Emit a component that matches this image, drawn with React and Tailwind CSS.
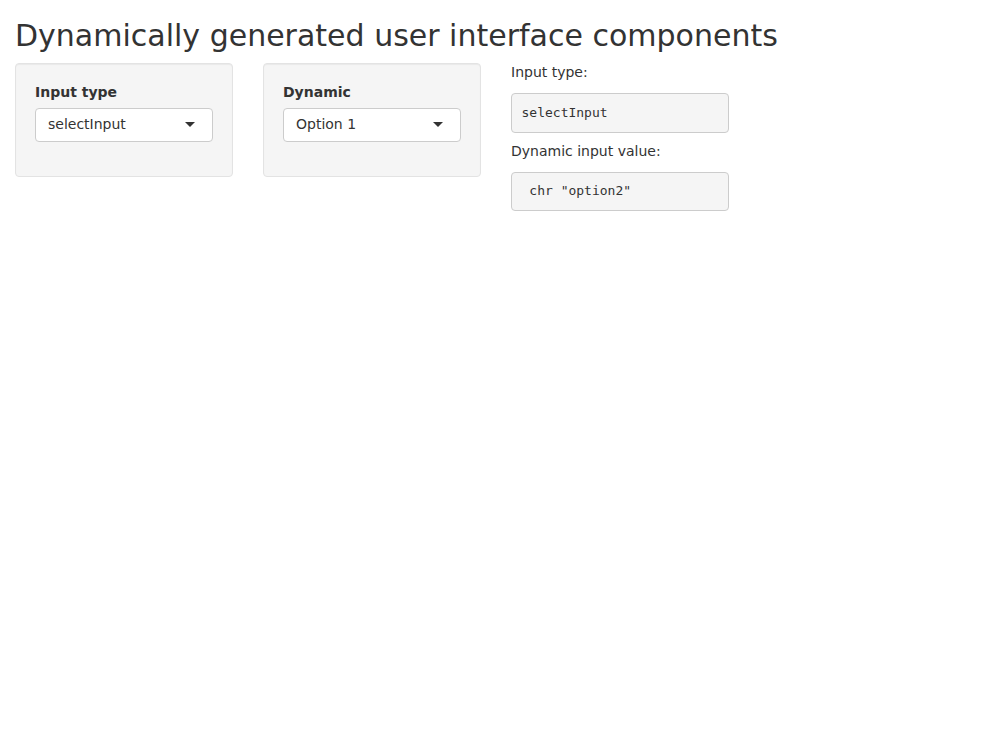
const sans = { fontFamily: '"DejaVu Sans", "Liberation Sans", sans-serif' };

function Caret() {
  return (
    <svg width="10" height="5" viewBox="0 0 10 5" className="shrink-0">
      <path d="M0 0 L10 0 L5 5 Z" fill="#333" />
    </svg>
  );
}

function Select({ value }) {
  return (
    <div className="flex h-[34px] items-center justify-between rounded-[4px] border border-[#cccccc] bg-white pb-[2px] pl-3 pr-[17px] text-[14px] text-[#333333]">
      <span>{value}</span>
      <Caret />
    </div>
  );
}

function Well({ label, value }) {
  return (
    <div className="min-h-[114px] rounded-[4px] border border-[#e3e3e3] bg-[#f5f5f5] px-[19px] pb-[19px] pt-[18px] shadow-[inset_0_1px_1px_rgba(0,0,0,0.05)]">
      <div className="mb-[6px] text-[14px] font-bold leading-5 text-[#333333]">{label}</div>
      <Select value={value} />
    </div>
  );
}

function Output({ children, last }) {
  return (
    <pre
      className={
        "whitespace-pre rounded-[4px] border border-[#cccccc] bg-[#f5f5f5] px-[9.5px] py-[9.5px] text-[13px] leading-[18.57px] text-[#333333] " +
        (last ? "mb-[10px]" : "mb-[9px]")
      }
      style={{ fontFamily: '"DejaVu Sans Mono", "Liberation Mono", monospace' }}
    >
      {children}
    </pre>
  );
}

export default function App() {
  return (
    <div className="min-h-[744px] bg-white px-[15px] text-[14px] leading-5 text-[#333333]" style={sans}>
      <h2 className="mb-[11px] mt-[19px] text-[30px] font-normal leading-[33px]">
        Dynamically generated user interface components
      </h2>
      <div className="grid grid-cols-[218px_218px_218px] items-start gap-x-[30px]">
        <Well label="Input type" value="selectInput" />
        <Well label="Dynamic" value="Option 1" />
        <div>
          <p className="mb-[12px] leading-[18px]">Input type:</p>
          <Output>selectInput</Output>
          <p className="mb-[12px] leading-[18px]">Dynamic input value:</p>
          <Output last>{' chr "option2"'}</Output>
        </div>
      </div>
    </div>
  );
}
